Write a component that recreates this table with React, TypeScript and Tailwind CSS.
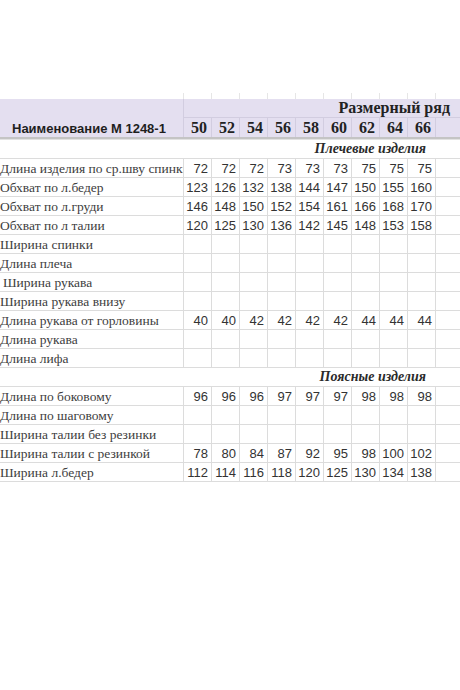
import React from "react";

const sizes = [50, 52, 54, 56, 58, 60, 62, 64, 66];

type Row =
  | { kind: "section"; title: string }
  | { kind: "data"; label: string; values?: number[]; indent?: boolean };

const rows: Row[] = [
  { kind: "section", title: "Плечевые изделия" },
  { kind: "data", label: "Длина изделия по ср.шву спинки", values: [72, 72, 72, 73, 73, 73, 75, 75, 75] },
  { kind: "data", label: "Обхват по л.бедер", values: [123, 126, 132, 138, 144, 147, 150, 155, 160] },
  { kind: "data", label: "Обхват по л.груди", values: [146, 148, 150, 152, 154, 161, 166, 168, 170] },
  { kind: "data", label: "Обхват по л талии", values: [120, 125, 130, 136, 142, 145, 148, 153, 158] },
  { kind: "data", label: "Ширина спинки" },
  { kind: "data", label: "Длина плеча" },
  { kind: "data", label: "Ширина рукава", indent: true },
  { kind: "data", label: "Ширина рукава внизу" },
  { kind: "data", label: "Длина рукава от горловины", values: [40, 40, 42, 42, 42, 42, 44, 44, 44] },
  { kind: "data", label: "Длина рукава" },
  { kind: "data", label: "Длина лифа" },
  { kind: "section", title: "Поясные изделия" },
  { kind: "data", label: "Длина по боковому", values: [96, 96, 96, 97, 97, 97, 98, 98, 98] },
  { kind: "data", label: "Длина по шаговому" },
  { kind: "data", label: "Ширина талии без резинки" },
  { kind: "data", label: "Ширина талии с резинкой", values: [78, 80, 84, 87, 92, 95, 98, 100, 102] },
  { kind: "data", label: "Ширина л.бедер", values: [112, 114, 116, 118, 120, 125, 130, 134, 138] },
];

const serif = "font-['Liberation_Serif','Times_New_Roman',serif]";
const sans = "font-['Liberation_Sans',Arial,sans-serif]";

const SectionRow = ({ title }: { title: string }) => (
  <div className="flex h-[19px] items-center justify-end border-b border-[#dcdcdc] pr-[34px]">
    <span className={`${serif} text-[14px] font-bold italic leading-[14px] text-[#2a2a2a]`}>{title}</span>
  </div>
);

const DataRow = ({ label, values, indent }: { label: string; values?: number[]; indent?: boolean }) => (
  <div className="flex h-[19px] border-b border-[#dcdcdc]">
    <div
      className={`flex w-[184px] shrink-0 items-end overflow-hidden whitespace-nowrap border-r border-[#dcdcdc] pb-[1px] ${indent ? "pl-[3px]" : "pl-0"}`}
    >
      <span className={`${serif} text-[13.5px] leading-[14px] text-[#404040]`}>{label}</span>
    </div>
    {sizes.map((s, i) => (
      <div
        key={s}
        className="flex w-[28px] shrink-0 items-end justify-end border-r border-[#dcdcdc] pb-[1px] pr-[3px]"
      >
        {values && (
          <span className={`${sans} text-[13px] leading-[14px] text-[#333]`}>{values[i]}</span>
        )}
      </div>
    ))}
    <div className="flex-1" />
  </div>
);

export default function App() {
  return (
    <div className="h-[690px] w-[460px] overflow-hidden bg-white">
      <div className="h-[93px]" />
      {/* faint grid from the empty row above the header */}
      <div className="flex h-[6px]">
        <div className="w-[184px] shrink-0 border-r border-[#e6e6e6]" />
        {sizes.map((s) => (
          <div key={s} className="w-[28px] shrink-0 border-r border-[#e6e6e6]" />
        ))}
      </div>

      {/* header */}
      <div className="flex h-[38px] bg-[#e4dff0]">
        <div className="flex w-[184px] shrink-0 items-end border-r border-[#d2cde0] pl-[12px]">
          <span className={`${sans} text-[13px] font-bold leading-[16px] text-[#1e1e1e]`}>
            Наименование М 1248-1
          </span>
        </div>
        <div className="flex flex-1 flex-col">
          <div className="flex h-[19px] items-center justify-end border-b border-[#d2cde0] pr-[10px]">
            <span className={`${serif} text-[16px] font-bold leading-[16px] text-[#222]`}>Размерный ряд</span>
          </div>
          <div className="flex h-[19px]">
            {sizes.map((s) => (
              <div
                key={s}
                className="flex w-[28px] shrink-0 items-center justify-end border-r border-[#d2cde0] pr-[4px]"
              >
                <span className={`${serif} text-[16px] font-bold leading-[16px] text-[#222]`}>{s}</span>
              </div>
            ))}
            <div className="flex-1" />
          </div>
        </div>
      </div>
      <div className="h-[2px] bg-[#c4c4c4]" />
      <div className="h-[1px] bg-[#e2e2e2]" />

      {rows.map((r, i) =>
        r.kind === "section" ? (
          <SectionRow key={i} title={r.title} />
        ) : (
          <DataRow key={i} label={r.label} values={r.values} indent={r.indent} />
        )
      )}
    </div>
  );
}
